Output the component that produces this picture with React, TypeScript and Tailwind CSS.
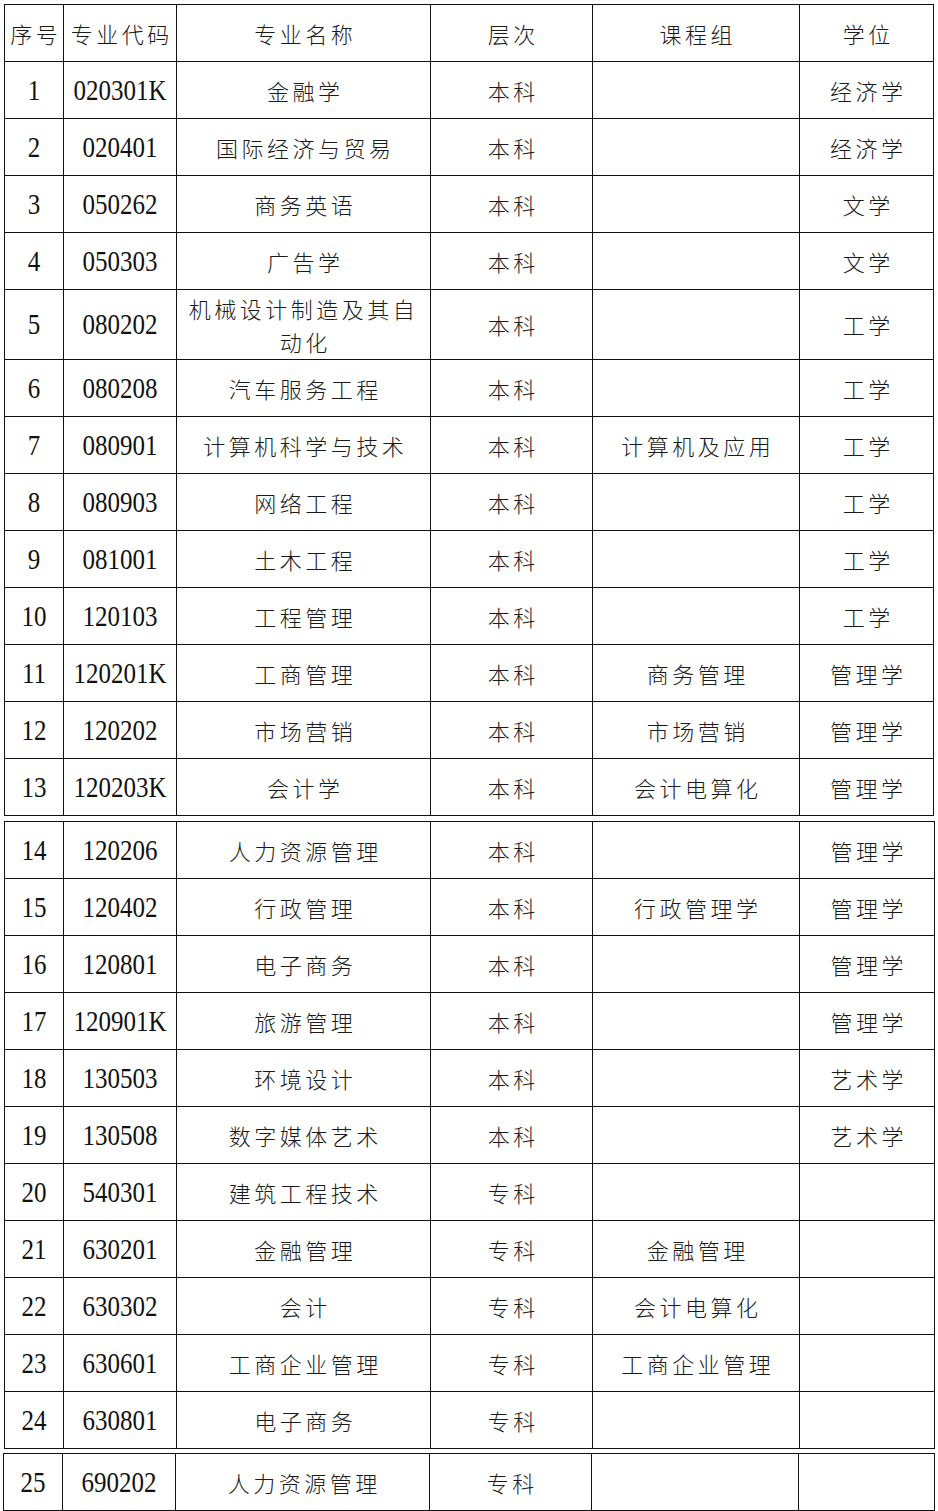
import React from "react";

type Row = [string, string, string, string, string, string];

const t1: Row[] = [
  ["1", "020301K", "金融学", "本科", "", "经济学"],
  ["2", "020401", "国际经济与贸易", "本科", "", "经济学"],
  ["3", "050262", "商务英语", "本科", "", "文学"],
  ["4", "050303", "广告学", "本科", "", "文学"],
  ["5", "080202", "机械设计制造及其自动化", "本科", "", "工学"],
  ["6", "080208", "汽车服务工程", "本科", "", "工学"],
  ["7", "080901", "计算机科学与技术", "本科", "计算机及应用", "工学"],
  ["8", "080903", "网络工程", "本科", "", "工学"],
  ["9", "081001", "土木工程", "本科", "", "工学"],
  ["10", "120103", "工程管理", "本科", "", "工学"],
  ["11", "120201K", "工商管理", "本科", "商务管理", "管理学"],
  ["12", "120202", "市场营销", "本科", "市场营销", "管理学"],
  ["13", "120203K", "会计学", "本科", "会计电算化", "管理学"],
];
const t2: Row[] = [
  ["14", "120206", "人力资源管理", "本科", "", "管理学"],
  ["15", "120402", "行政管理", "本科", "行政管理学", "管理学"],
  ["16", "120801", "电子商务", "本科", "", "管理学"],
  ["17", "120901K", "旅游管理", "本科", "", "管理学"],
  ["18", "130503", "环境设计", "本科", "", "艺术学"],
  ["19", "130508", "数字媒体艺术", "本科", "", "艺术学"],
  ["20", "540301", "建筑工程技术", "专科", "", ""],
  ["21", "630201", "金融管理", "专科", "金融管理", ""],
  ["22", "630302", "会计", "专科", "会计电算化", ""],
  ["23", "630601", "工商企业管理", "专科", "工商企业管理", ""],
  ["24", "630801", "电子商务", "专科", "", ""],
];
const t3: Row[] = [["25", "690202", "人力资源管理", "专科", "", ""]];

const cjk = "font-['Noto_Sans_CJK_SC',sans-serif] text-[22px] tracking-[3.5px] text-[#1a1a1a] font-light";
const num = "font-['Liberation_Serif',serif] text-[25px] text-[#111]";

function Cn({ s }: { s: string }) {
  return <span className={cjk + " mr-[-3.5px] leading-[33px]"}>{s}</span>;
}
function Num({ s }: { s: string }) {
  return <span className={num + " inline-block scale-y-[1.18] leading-none"}>{s}</span>;
}

const td = "border-[1.5px] border-[#111] text-center align-middle p-0";

function Cols({ last = 134 }: { last?: number }) {
  return (
    <colgroup>
      <col className="w-[59px]" />
      <col className="w-[113px]" />
      <col className="w-[254px]" />
      <col className="w-[162px]" />
      <col className="w-[207px]" />
      <col style={{ width: last }} />
    </colgroup>
  );
}

function Body({ rows }: { rows: Row[] }) {
  return (
    <tbody>
      {rows.map((r) => (
        <tr key={r[0]} className={r[0] === "5" ? "h-[70px]" : "h-[57px]"}>
          <td className={td}>
            <Num s={r[0]} />
          </td>
          <td className={td}>
            <Num s={r[1]} />
          </td>
          <td className={td + " px-[10px]"}>
            <Cn s={r[2]} />
          </td>
          <td className={td}>
            <Cn s={r[3]} />
          </td>
          <td className={td}>
            <Cn s={r[4]} />
          </td>
          <td className={td}>
            <Cn s={r[5]} />
          </td>
        </tr>
      ))}
    </tbody>
  );
}

export default function App() {
  return (
    <div className="bg-white w-[938px] h-[1511px] overflow-hidden pt-[4px] pl-[4px]">
      <table className="table-fixed border-collapse w-[929px]">
        <Cols />
        <thead>
          <tr className="h-[57px]">
            {["序号", "专业代码", "专业名称", "层次", "课程组", "学位"].map((h) => (
              <td key={h} className={td}>
                <Cn s={h} />
              </td>
            ))}
          </tr>
        </thead>
        <Body rows={t1} />
      </table>
      <div className="h-[5px]" />
      <table className="table-fixed border-collapse w-[930px]">
        <Cols last={135} />
        <Body rows={t2} />
      </table>
      <div className="h-[4px]" />
      <table className="table-fixed border-collapse w-[931px] ml-[-1px]">
        <Cols last={136} />
        <Body rows={t3} />
      </table>
    </div>
  );
}
